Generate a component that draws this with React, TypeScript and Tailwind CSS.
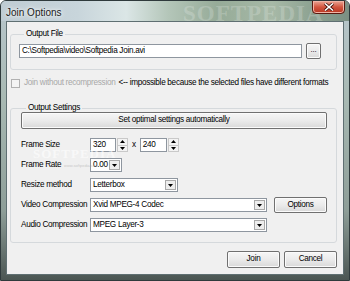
import React from 'react';

// small black triangle used by combos and spinners
const Tri = ({ dir = 'down' }: { dir?: 'up' | 'down' }) => (
  <svg width="5" height="3" viewBox="0 0 5 3">
    {dir === 'down' ? <polygon points="0,0 5,0 2.5,3" fill="#000" /> : <polygon points="0,3 5,3 2.5,0" fill="#000" />}
  </svg>
);

const Button = ({ children, className = '' }: { children: React.ReactNode; className?: string }) => (
  <div
    className={`flex items-center justify-center border border-[#707070] rounded-[2px] bg-gradient-to-b from-[#f6f6f6] via-[#ebebeb] to-[#d9d9d9] shadow-[inset_0_0_0_1px_#fbfbfb] ${className}`}
  >
    {children}
  </div>
);

const Combo = ({ value, className = '' }: { value: string; className?: string }) => (
  <div className={`flex items-center h-[14px] border border-[#8e969f] bg-white pl-[2px] pr-[1px] ${className}`}>
    <span className="leading-none">{value}</span>
    <div className="ml-auto w-[11px] h-[10px] flex items-center justify-center border border-[#a9a9a9] bg-[#ededed]">
      <Tri />
    </div>
  </div>
);

const Spin = ({ value, w }: { value: string; w: string }) => (
  <div className="flex items-center h-[14px]">
    <div className={`h-full flex items-center border border-[#8e969f] bg-white pl-[2px] ${w}`}>
      <span className="leading-none">{value}</span>
    </div>
    <div className="flex flex-col h-full w-[11px] ml-[1px]">
      <div className="flex-1 flex items-center justify-center border border-[#c9c9c9] bg-[#f3f3f3]">
        <Tri dir="up" />
      </div>
      <div className="flex-1 flex items-center justify-center border border-t-0 border-[#c9c9c9] bg-[#f3f3f3]">
        <Tri />
      </div>
    </div>
  </div>
);

const Row = ({ label, children }: { label: string; children: React.ReactNode }) => (
  <div className="flex items-center h-[16px]">
    <span className="w-[69px] shrink-0">{label}</span>
    {children}
  </div>
);

export default function App() {
  return (
    <div className="relative w-[350px] h-[281px] overflow-hidden whitespace-nowrap text-[8.2px] tracking-[-0.3px] text-black font-['Liberation_Sans',Arial,sans-serif] border border-[#2f3a3c] rounded-t-[6px] bg-[linear-gradient(180deg,#b9c7cd_0%,#a8b9b3_35%,#8e9e98_75%,#4b5653_100%)]">
      {/* title bar */}
      <div className="relative flex h-[20px] bg-[linear-gradient(90deg,#bfccd3_0%,#c8d5db_22%,#dbe6e6_36%,#b4c6b9_48%,#96ab98_62%,#a7b9a7_78%,#90a594_88%,#7b8f83_100%)]">
        <span className="pl-[5px] pt-[4px] text-[10px] tracking-normal text-[#1b1b1b] [text-shadow:0_0_6px_#ffffff,0_0_3px_#ffffff]">Join Options</span>
        <span className="absolute left-[182px] top-[-4px] text-[23px] font-bold tracking-[1px] text-white/20 font-['Liberation_Serif',serif]">SOFTPEDIA</span>
        <div className="relative ml-auto mr-[4px] w-[33px] h-[14px] mt-[-1px] flex items-center justify-center rounded-b-[4px] border border-[#5a1a10] bg-gradient-to-b from-[#e9a595] via-[#d2553f] to-[#b83621] shadow-[inset_0_0_0_1px_#f1b4a6]">
          <svg width="10" height="8" viewBox="0 0 10 8">
            <path d="M1 0.5 L9 7.5 M9 0.5 L1 7.5" stroke="#3a0c06" strokeWidth="3" />
            <path d="M1 0.5 L9 7.5 M9 0.5 L1 7.5" stroke="#ffffff" strokeWidth="1.6" />
          </svg>
        </div>
      </div>

      {/* client area */}
      <div className="relative mx-[5px] h-[254px] border border-[#5f6f72] bg-[#f0f0f0] flex flex-col">
        <fieldset className="mt-[8px] ml-[3px] mr-[6px] border border-[#d5d9dc] rounded-[3px] px-[8px] pb-[10px]">
          <legend className="ml-[5px] px-[2px] leading-[8px] h-[8px]">Output File</legend>
          <div className="mt-[5px] flex items-center h-[16px] gap-[4px]">
            <div className="w-[283px] h-[14px] flex items-center border border-[#8e969f] bg-white pl-[2px]">
              <span className="leading-none">C:\Softpedia\video\Softpedia Join.avi</span>
            </div>
            <Button className="w-[15px] h-[16px]">
              <span className="leading-none text-[8px] -mt-[2px]">...</span>
            </Button>
          </div>
        </fieldset>

        <div className="mt-[7px] ml-[4px] flex items-center h-[12px]">
          <div className="w-[9px] h-[9px] border border-[#b1b1b1] bg-[#f4f4f4]" />
          <span className="ml-[4px] text-[#a8a8a8]">Join without recompression</span>
          <span className="ml-[3px]">{'<-- impossible because the selected files have different formats'}</span>
        </div>

        <fieldset className="mt-[15px] ml-[3px] mr-[6px] border border-[#d5d9dc] rounded-[3px] pl-[10px] pr-[9px] pb-[9px]">
          <legend className="ml-[5px] px-[2px] leading-[8px] h-[8px]">Output Settings</legend>
          <Button className="h-[17px] w-full">Set optimal settings automatically</Button>
          <div className="mt-[8px] flex flex-col gap-[4px]">
            <Row label="Frame Size">
              <Spin value="320" w="w-[26px]" />
              <span className="mx-[4px]">x</span>
              <Spin value="240" w="w-[27px]" />
            </Row>
            <Row label="Frame Rate">
              <Combo value="0.00" className="w-[32px]" />
            </Row>
            <Row label="Resize method">
              <Combo value="Letterbox" className="w-[88px]" />
            </Row>
            <Row label="Video Compression">
              <Combo value="Xvid MPEG-4 Codec" className="w-[177px]" />
              <Button className="ml-[7px] w-[53px] h-[16px]">Options</Button>
            </Row>
            <Row label="Audio Compression">
              <Combo value="MPEG Layer-3" className="w-[177px]" />
            </Row>
          </div>
        </fieldset>

        <div className="mt-[8px] mr-[6px] flex justify-end gap-[4px]">
          <Button className="w-[53px] h-[17px]">Join</Button>
          <Button className="w-[53px] h-[17px]">Cancel</Button>
        </div>

        {/* faint watermark */}
        <span className="absolute left-[26px] top-[125px] text-[13px] leading-[13px] font-bold tracking-[1px] text-white/60 font-['Liberation_Serif',serif] pointer-events-none">SOFTPEDIA</span>
        <span className="absolute left-[57px] top-[142px] text-[4px] leading-[4px] tracking-normal text-[#9a9a9a]/50 pointer-events-none">www.softpedia.com</span>
      </div>
    </div>
  );
}
